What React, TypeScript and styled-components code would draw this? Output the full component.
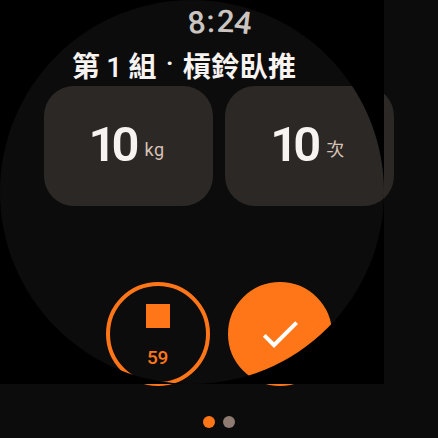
import React from 'react';
import styled, { createGlobalStyle } from 'styled-components';

const Global = createGlobalStyle`
  body { margin: 0; background: #0c0c0c; overflow: hidden; }
`;

const Screen = styled.main`
  position: relative;
  width: 438px;
  height: 438px;
  overflow: hidden;
  box-sizing: border-box;
  padding-top: 48px;
  background: #0c0c0c;
  color: #f7f3f0;
  font-family: Roboto, "Noto Sans CJK TC", sans-serif;
  display: flex;
  flex-direction: column;
`;

const Clock = styled.div`
  position: absolute;
  inset: 0;
  z-index: 2;
  color: #cac5c0;
`;

const ClockGlyph = styled.span<{ $angle: number }>`
  position: absolute;
  left: 209px;
  top: 4px;
  width: 20px;
  text-align: center;
  font-size: 31px;
  line-height: 36px;
  font-weight: 500;
  transform-origin: 10px 215px;
  transform: rotate(${p => p.$angle}deg);
`;

const Title = styled.h1`
  display: flex;
  margin: 0 0 0 72px;
  height: 38px;
  font-size: 28px;
  line-height: 40px;
  font-weight: 700;
  letter-spacing: 0.4px;
  white-space: nowrap;
`;

const SetNumber = styled.span`
  width: 28px;
  text-align: center;
  font-weight: 500;
`;

const Separator = styled.span`
  width: 26px;
  height: 32px;
  line-height: 32px;
  text-align: center;
  font-weight: 500;
`;

const Cards = styled.section`
  display: flex;
  gap: 12px;
  margin-left: 44px;
`;

const Card = styled.div`
  flex: none;
  width: 169px;
  height: 120px;
  box-sizing: border-box;
  padding-right: 4px;
  border-radius: 30px;
  background: #2c2825;
  display: flex;
  align-items: center;
  justify-content: center;
  gap: 10px;
`;

const Value = styled.span`
  padding-bottom: 2px;
  font-size: 49px;
  line-height: 56px;
  font-weight: 600;
  letter-spacing: -5px;
`;

const Unit = styled.span`
  font-size: 18px;
  line-height: 24px;
  padding-top: 8px;
  color: #d7c2b7;
  letter-spacing: 0.4px;
`;

const Actions = styled.section`
  display: flex;
  gap: 18px;
  margin: 76px 0 0 106px;
`;

const RoundButton = styled.button<{ $filled?: boolean }>`
  width: 104px;
  height: 104px;
  box-sizing: border-box;
  padding: 0;
  border: 4px solid #ff7618;
  border-radius: 50%;
  background: ${p => (p.$filled ? '#ff7618' : 'transparent')};
  color: ${p => (p.$filled ? '#fff' : '#ff7618')};
  font-family: inherit;
  display: flex;
  flex-direction: column;
  align-items: center;
  justify-content: center;
`;

const StopMark = styled.span`
  width: 24px;
  height: 24px;
  margin-top: 6px;
  background: currentColor;
`;

const Seconds = styled.span`
  margin: 18px 1px 0 0;
  font-size: 19px;
  line-height: 24px;
  font-weight: 500;
  letter-spacing: -0.3px;
`;

const DialMask = styled.div`
  position: absolute;
  top: 0;
  left: 0;
  width: 384px;
  height: 384px;
  overflow: hidden;
  pointer-events: none;

  &::before {
    content: '';
    display: block;
    width: 384px;
    height: 384px;
    border-radius: 50%;
    box-shadow: 0 0 0 200px #000;
  }
`;

const Pager = styled.nav`
  display: flex;
  gap: 8px;
  margin: 30px 0 0 203px;
`;

const Dot = styled.span<{ $active?: boolean }>`
  width: 12px;
  height: 12px;
  border-radius: 50%;
  background: ${p => (p.$active ? '#ff7618' : '#8e7b72')};
`;

const clock = [
  { char: '8', angle: -6.5 },
  { char: ':', angle: -2.4 },
  { char: '2', angle: 1.9 },
  { char: '4', angle: 7 },
];

export default function App() {
  return (
    <>
      <Global />
      <Screen>
        <Clock>
          {clock.map(g => (
            <ClockGlyph key={g.char} $angle={g.angle}>{g.char}</ClockGlyph>
          ))}
        </Clock>
        <Title>
          <span>第</span>
          <SetNumber>1</SetNumber>
          <span>組</span>
          <Separator>·</Separator>
          <span>槓鈴臥推</span>
        </Title>
        <Cards>
          <Card><Value>10</Value><Unit>kg</Unit></Card>
          <Card><Value>10</Value><Unit>次</Unit></Card>
        </Cards>
        <Actions>
          <RoundButton>
            <StopMark />
            <Seconds>59</Seconds>
          </RoundButton>
          <RoundButton $filled>
            <svg width="48" height="48" viewBox="0 0 24 24" fill="currentColor">
              <path d="M9 16.17 4.83 12l-1.42 1.41L9 19 21 7l-1.41-1.41z" />
            </svg>
          </RoundButton>
        </Actions>
        <Pager>
          <Dot $active />
          <Dot />
        </Pager>
        <DialMask />
      </Screen>
    </>
  );
}
